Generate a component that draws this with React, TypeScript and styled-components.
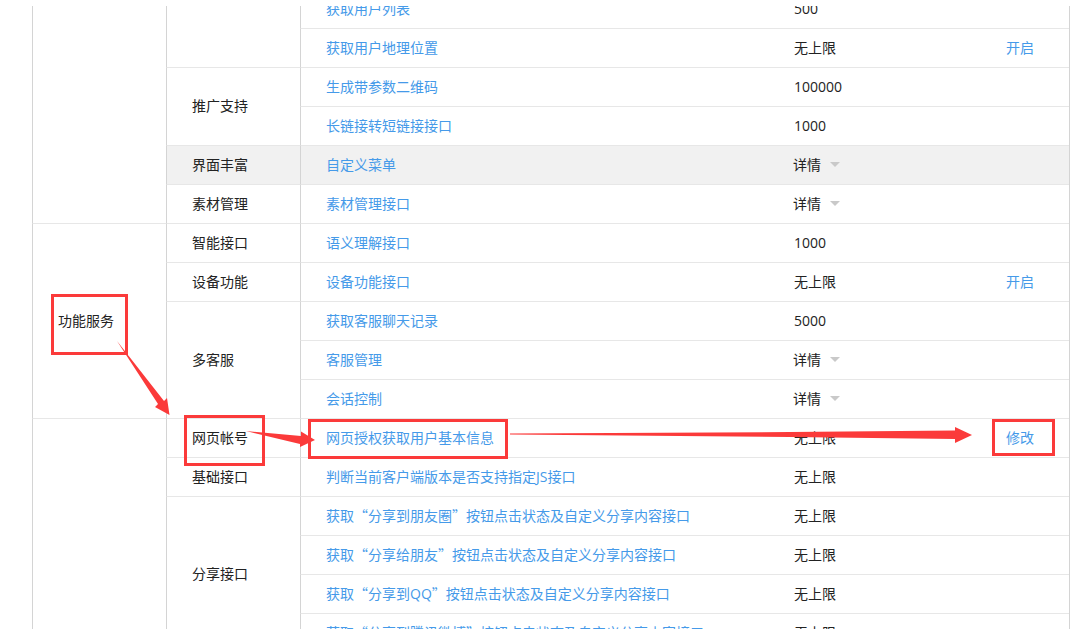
import React from "react";
import styled, { createGlobalStyle } from "styled-components";

const GlobalStyle = createGlobalStyle`
  html, body { margin: 0; padding: 0; background: #fff; }
  body { font-family: "Open Sans", "Noto Sans CJK SC", sans-serif; font-size: 14px; color: #222; }
`;

const Page = styled.div`
  position: relative;
  width: 1074px;
  height: 629px;
  padding-top: 6px;
  box-sizing: border-box;
  overflow: hidden;
`;

const Clip = styled.div`
  height: 623px;
  overflow: hidden;
  padding-left: 32px;
`;

const Table = styled.table`
  table-layout: fixed;
  width: 1038px;
  margin-top: -16px;
  border-collapse: separate;
  border-spacing: 0;
  border-right: 1px solid #d4d4d4;
`;

const Cell = styled.td<{ $shaded?: boolean }>`
  height: 39px;
  padding: 0 0 1px 25px;
  box-sizing: border-box;
  border-left: 1px solid #d4d4d4;
  border-bottom: 1px solid #e7e7e7;
  background: ${(p) => (p.$shaded ? "#f1f1f1" : "transparent")};
  line-height: 20px;
  vertical-align: middle;
  white-space: nowrap;
  overflow: visible;
`;

const QuotaCell = styled(Cell)`
  border-left: none;
  padding-left: 26px;
`;

const ActionCell = styled(Cell)`
  border-left: none;
  padding-left: 26px;
`;

const Link = styled.a`
  color: #459ae9;
  text-decoration: none;
`;

const Quote = styled.span`
  font-family: "Noto Sans CJK SC", sans-serif;
`;

const Detail = styled.span`
  display: inline-flex;
  align-items: center;
  gap: 9px;
  margin-left: -1px;
`;

const Caret = styled.i`
  width: 0;
  height: 0;
  border-style: solid;
  border-width: 5px 5px 0;
  border-color: #c9c9c9 transparent transparent;
`;

const Annotations = styled.svg`
  position: absolute;
  left: 0;
  top: 0;
  pointer-events: none;
`;

type Row = { name: string; quota: string; action?: string; shaded?: boolean };
type Group = { title: string; rows: Row[] };
type Section = { title: string; groups: Group[] };

const share = "按钮点击状态及自定义分享内容接口";

const sections: Section[] = [
  {
    title: "",
    groups: [
      {
        title: "",
        rows: [
          { name: "获取用户列表", quota: "500" },
          { name: "获取用户地理位置", quota: "无上限", action: "开启" },
        ],
      },
      {
        title: "推广支持",
        rows: [
          { name: "生成带参数二维码", quota: "100000" },
          { name: "长链接转短链接接口", quota: "1000" },
        ],
      },
      { title: "界面丰富", rows: [{ name: "自定义菜单", quota: "详情", shaded: true }] },
      { title: "素材管理", rows: [{ name: "素材管理接口", quota: "详情" }] },
    ],
  },
  {
    title: "功能服务",
    groups: [
      { title: "智能接口", rows: [{ name: "语义理解接口", quota: "1000" }] },
      { title: "设备功能", rows: [{ name: "设备功能接口", quota: "无上限", action: "开启" }] },
      {
        title: "多客服",
        rows: [
          { name: "获取客服聊天记录", quota: "5000" },
          { name: "客服管理", quota: "详情" },
          { name: "会话控制", quota: "详情" },
        ],
      },
    ],
  },
  {
    title: "",
    groups: [
      { title: "网页帐号", rows: [{ name: "网页授权获取用户基本信息", quota: "无上限", action: "修改" }] },
      { title: "基础接口", rows: [{ name: "判断当前客户端版本是否支持指定JS接口", quota: "无上限" }] },
      {
        title: "分享接口",
        rows: [
          { name: `获取“分享到朋友圈”${share}`, quota: "无上限" },
          { name: `获取“分享给朋友”${share}`, quota: "无上限" },
          { name: `获取“分享到QQ”${share}`, quota: "无上限" },
          { name: `获取“分享到腾讯微博”${share}`, quota: "无上限" },
        ],
      },
    ],
  },
];

const boxes = [
  { x: 51, y: 294, w: 77, h: 61 },
  { x: 184, y: 415, w: 81, h: 51 },
  { x: 308, y: 419, w: 200, h: 40 },
  { x: 992, y: 419, w: 63, h: 37 },
];

const arrows = [
  "117,341 164,401 167,398 169.5,415 155,407 158,404",
  "246,431 301,436 301,431.5 315,440 300,447 300,444",
  "510,433.5 790,432 955,430.5 955,427 972,435 955,443 955,439 790,437 510,434.6",
];

const count = (s: Section) => s.groups.reduce((n, g) => n + g.rows.length, 0);

const withQuotes = (name: string) =>
  name.split(/([“”])/).map((part, i) => (part === "“" || part === "”" ? <Quote key={i}>{part}</Quote> : part));

export default function App() {
  return (
    <Page>
      <GlobalStyle />
      <Clip>
        <Table>
          <colgroup>
            <col width={134} />
            <col width={134} />
            <col width={468} />
            <col width={212} />
            <col />
          </colgroup>
          <tbody>
            {sections.flatMap((section, si) =>
              section.groups.flatMap((group, gi) =>
                group.rows.map((row, ri) => (
                  <tr key={`${si}-${gi}-${ri}`}>
                    {gi === 0 && ri === 0 && <Cell rowSpan={count(section)}>{section.title}</Cell>}
                    {ri === 0 && (
                      <Cell rowSpan={group.rows.length} $shaded={row.shaded}>
                        {group.title}
                      </Cell>
                    )}
                    <Cell $shaded={row.shaded}>
                      <Link>{withQuotes(row.name)}</Link>
                    </Cell>
                    <QuotaCell $shaded={row.shaded}>
                      {row.quota === "详情" ? (
                        <Detail>
                          详情
                          <Caret />
                        </Detail>
                      ) : (
                        row.quota
                      )}
                    </QuotaCell>
                    <ActionCell $shaded={row.shaded}>{row.action && <Link>{row.action}</Link>}</ActionCell>
                  </tr>
                ))
              )
            )}
          </tbody>
        </Table>
      </Clip>
      <Annotations width="1074" height="629" viewBox="0 0 1074 629">
        {boxes.map((b) => (
          <rect
            key={b.x}
            x={b.x + 1.5}
            y={b.y + 1.5}
            width={b.w - 3}
            height={b.h - 3}
            fill="none"
            stroke="#fb3a3a"
            strokeWidth="3"
          />
        ))}
        {arrows.map((points) => (
          <polygon key={points} points={points} fill="#fb3a3a" />
        ))}
      </Annotations>
    </Page>
  );
}
